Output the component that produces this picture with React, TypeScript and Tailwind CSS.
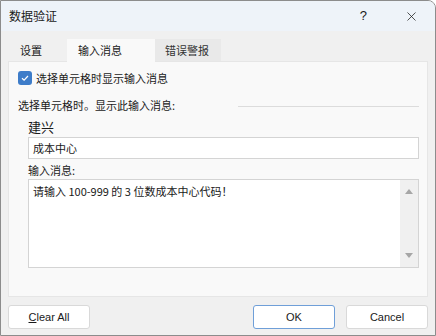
import { X } from 'lucide-react';

const font = { fontFamily: '"Noto Sans CJK SC", "Noto Sans", sans-serif' };
const latin = { fontFamily: '"Liberation Sans", sans-serif' };

function Tab({ label, active, tone }: { label: string; active?: boolean; tone: string }) {
  return (
    <div
      className={`flex items-center h-[22px] text-[11px] text-[#1a1a1a] ${tone} ${
        active ? 'relative z-10 h-[23px] -mb-px' : ''
      }`}
    >
      {label}
    </div>
  );
}

export default function App() {
  return (
    <div
      className="w-[436px] h-[336px] flex flex-col overflow-hidden rounded-tr-[8px] border border-[#8c8c8c] bg-[#f0f0f0]"
      style={font}
    >
      <div className="h-[30px] flex items-center justify-between bg-[#eef3f9] pl-[8px] pr-[16px]">
        <span className="text-[12px] text-[#1a1a1a]">数据验证</span>
        <div className="flex items-center gap-[37px]">
          <span className="text-[13px] text-[#1a1a1a]" style={latin}>
            ?
          </span>
          <X size={15} strokeWidth={1.2} className="text-[#1a1a1a]" />
        </div>
      </div>

      <div className="flex-1 flex flex-col px-[7px] pt-[8px]">
        <div className="flex items-end">
          <Tab label="设置" tone="w-[59px] pl-[12px] bg-[#f0f0f0]" />
          <Tab label="输入消息" active tone="w-[88px] pl-[11px] bg-[#f9f9f9]" />
          <Tab label="错误警报" tone="w-[66px] pl-[10px] bg-[#e9e9e9] text-[#333]" />
        </div>

        <div className="h-[236px] bg-[#f9f9f9] border border-[#e6e6e6] pl-[9px] pr-[7px] pt-[8px]">
          <label className="flex items-center gap-[4px] h-[16px]">
            <span className="w-[14px] h-[14px] rounded-[3px] bg-[#3d7cc9] flex items-center justify-center">
              <svg width="10" height="10" viewBox="0 0 10 10" fill="none">
                <path d="M2 5.2 L4.1 7.2 L8 3" stroke="#ffffff" strokeWidth="1.2" />
              </svg>
            </span>
            <span className="text-[11px] text-[#1a1a1a]">选择单元格时显示输入消息</span>
          </label>

          <div className="flex items-center mt-[11px] h-[16px]">
            <span className="w-[220px] text-[11px] text-[#1a1a1a]">选择单元格时。显示此输入消息:</span>
            <div className="flex-1 h-px bg-[#dcdcdc] mr-[1px] mt-[2px]" />
          </div>

          <div className="pl-[10px] pr-[1px]">
            <div className="text-[13px] leading-[18px] text-[#1a1a1a] mt-[5px]">建兴</div>
            <div className="h-[22px] mt-[1px] bg-white border border-[#d4d4d4] flex items-center pl-[4px] text-[11px] text-[#1a1a1a]">
              成本中心
            </div>
            <div className="text-[11px] leading-[16px] text-[#1a1a1a] mt-[3px]">输入消息:</div>
            <div className="h-[89px] mt-[1px] bg-white border border-[#d4d4d4] flex">
              <div className="flex-1 pl-[4px] pt-[3px] text-[11px] leading-[16px] text-[#1a1a1a]">
                请输入 100-999 的 3 位数成本中心代码！
              </div>
              <div className="w-[18px] bg-[#f0f0f0] flex flex-col items-center justify-between py-[9px]">
                <svg width="8" height="5" viewBox="0 0 8 5">
                  <path d="M0 5 L4 0 L8 5 Z" fill="#a6a6a6" />
                </svg>
                <svg width="8" height="5" viewBox="0 0 8 5">
                  <path d="M0 0 L4 5 L8 0 Z" fill="#a6a6a6" />
                </svg>
              </div>
            </div>
          </div>
        </div>

        <div className="flex items-center justify-between mt-[8px]">
          <button className="w-[82px] h-[24px] bg-white border border-[#d9d9d9] rounded-[3px] text-[11px] text-[#1a1a1a]" style={latin}>
            <span className="underline">C</span>lear All
          </button>
          <div className="flex gap-[11px]">
            <button className="w-[82px] h-[24px] bg-white border border-[#6f9fd8] rounded-[3px] text-[11px] text-[#1a1a1a]" style={latin}>
              OK
            </button>
            <button className="w-[82px] h-[24px] bg-white border border-[#d9d9d9] rounded-[3px] text-[11px] text-[#1a1a1a]" style={latin}>
              Cancel
            </button>
          </div>
        </div>
      </div>
    </div>
  );
}
